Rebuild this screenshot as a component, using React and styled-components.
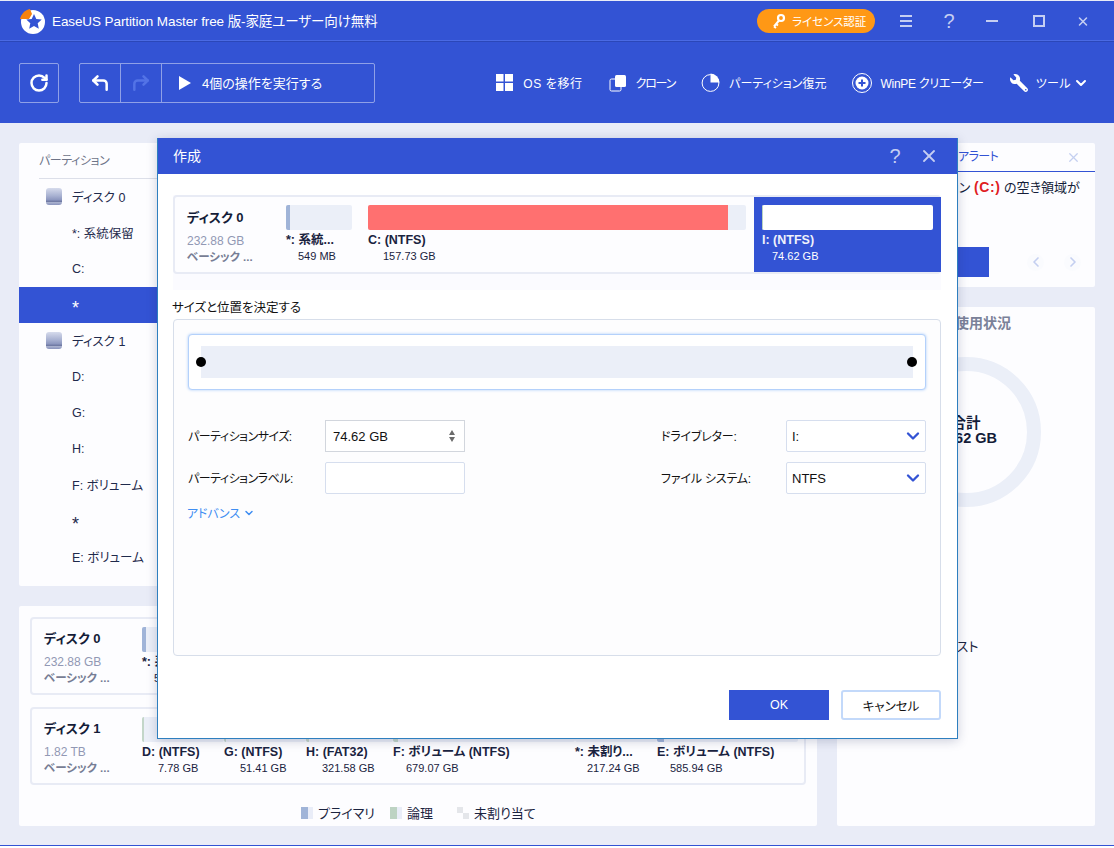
import React from "react";
import styled, { createGlobalStyle } from "styled-components";
import { ChevronDown, ChevronLeft, ChevronRight, CornerUpLeft, CornerUpRight, RotateCw, X } from "lucide-react";
import { FaWrench } from "react-icons/fa";

const FONT = `"Liberation Sans", "Noto Sans CJK JP", sans-serif`;
const BLUE = "#3353d4";

const GlobalStyle = createGlobalStyle`
  html, body { margin: 0; padding: 0; background: #e9ecf7; }
  body {
    font-family: ${FONT};
    font-feature-settings: "palt";
    font-size: 12.5px;
    color: #1b2440;
  }
  * { box-sizing: border-box; }
`;

const Window = styled.div`
  position: relative;
  width: 1114px;
  height: 848px;
  overflow: hidden;
  background: #e9ecf7;
  border-bottom: 2px solid #fff;
`;

const TitleBar = styled.div`
  height: 42px;
  display: flex;
  align-items: center;
  padding: 0 0 0 19px;
  background: ${BLUE};
  border-top: 1px solid #e9ecf7;
  border-bottom: 1px solid #2b47b8;
  box-shadow: inset 0 -1px 0 #4a6ae4;
  color: #fff;
`;

const TitleText = styled.span`
  margin-left: 7px;
  padding-bottom: 2px;
  font-size: 13.5px;
  letter-spacing: -0.1px;
  flex: 1;
`;

const LicenseButton = styled.div`
  width: 118px;
  height: 24px;
  display: flex;
  align-items: center;
  gap: 6px;
  padding-left: 15px;
  margin-right: 21px;
  border-radius: 12px;
  background: #ff9815;
  font-size: 11.5px;
`;

const WinButton = styled.div`
  width: ${(p) => p.$w || 44}px;
  display: flex;
  justify-content: center;
  color: #c5cef2;
  font-size: 20px;
  line-height: 20px;
`;

const Toolbar = styled.div`
  height: 81px;
  display: flex;
  align-items: center;
  padding: 0 25px 0 19px;
  background: ${BLUE};
  color: #fff;
`;

const IconBox = styled.div`
  width: 40px;
  height: 40px;
  display: flex;
  align-items: center;
  justify-content: center;
  border: 1px solid rgba(255, 255, 255, 0.45);
  border-radius: 2px;
`;

const ActionGroup = styled.div`
  width: 296px;
  height: 40px;
  margin-left: 20px;
  display: flex;
  border: 1px solid rgba(255, 255, 255, 0.45);
  border-radius: 2px;
`;

const ActionCell = styled.div`
  width: 41px;
  display: flex;
  align-items: center;
  justify-content: center;
  border-right: 1px solid rgba(255, 255, 255, 0.45);
`;

const RunCell = styled.div`
  flex: 1;
  display: flex;
  align-items: center;
  gap: 10px;
  padding-left: 16px;
  font-size: 13px;
`;

const ToolItems = styled.div`
  margin-left: auto;
  display: flex;
  align-items: center;
  gap: 26px;
`;

const ToolItem = styled.div`
  display: flex;
  align-items: center;
  gap: ${(p) => p.$gap || 9}px;
  font-size: 12px;
  letter-spacing: ${(p) => p.$ls || 0}px;
`;

const Wrench = styled(FaWrench)`
  transform: scaleX(-1);
`;

const ToolChevron = styled(ChevronDown)`
  margin-left: -6px;
`;

const Content = styled.div`
  display: grid;
  grid-template-columns: 798px 258px;
  column-gap: 20px;
  padding: 20px 19px 0;
  height: 723px;
  border-bottom: 1px solid ${BLUE};
`;

const Column = styled.div`
  display: flex;
  flex-direction: column;
  gap: 20px;
  height: 683px;
`;

const Panel = styled.div`
  background: #fdfdff;
  height: ${(p) => p.$h}px;
  border-radius: 2px;
  position: relative;
`;

const PartitionHead = styled.div`
  height: 36px;
  margin-left: 20px;
  padding-top: 8px;
  border-bottom: 1px solid #dcdfe9;
  color: #6e7488;
  font-size: 12px;
  letter-spacing: -0.4px;
`;

const TreeRow = styled.div`
  height: 36px;
  display: flex;
  align-items: center;
  gap: 10px;
  padding: ${(p) => (p.$big ? "7px" : "0")} 0 1px ${(p) => (p.$disk ? 27 : 53)}px;
  font-size: ${(p) => (p.$big ? 18 : 12.5)}px;
  color: ${(p) => (p.$on ? "#fff" : "#1f2a4c")};
  background: ${(p) => (p.$on ? BLUE : "transparent")};
`;

const DiskGlyph = styled.i`
  width: 16px;
  height: 17px;
  border-radius: 3px;
  background: linear-gradient(#d6dbec 0%, #a9b2d2 45%, #8a94bd 72%, #5f6a97 78%, #aab2cf 84%, #8a94bd 100%);
`;

const DiskStack = styled.div`
  display: flex;
  flex-direction: column;
  gap: 12px;
  padding: 11px 11px 0;
`;

const DiskCard = styled.div`
  display: flex;
  height: ${(p) => p.$h || 78}px;
  padding-left: 12px;
  border: 2px solid #e8ebf5;
  border-radius: 4px;
  background: #fdfdff;
`;

const DiskInfo = styled.div`
  width: ${(p) => p.$w}px;
  flex: none;
  padding-top: ${(p) => p.$top}px;
`;

const DiskName = styled.div`
  font-weight: 700;
  font-size: 13px;
  color: #141c38;
  margin-bottom: 7px;
`;

const DiskMeta = styled.div`
  font-size: ${(p) => (p.$soft ? 12 : 11.5)}px;
  line-height: 16px;
  color: ${(p) => (p.$soft ? "#9198b4" : "#777d95")};
  font-weight: ${(p) => (p.$soft ? 400 : 700)};
`;

const Slot = styled.div`
  width: ${(p) => p.$w}px;
  margin-left: ${(p) => p.$gap || 0}px;
  flex: none;
  white-space: nowrap;
  padding: ${(p) => (p.$on ? "8px 8px 0" : "8px 0 0")};
  background: ${(p) => (p.$on ? BLUE : "transparent")};
  color: ${(p) => (p.$on ? "#fff" : "#1a2340")};
`;

const Bar = styled.div`
  height: 25px;
  border-radius: 2px;
  background: ${(p) => p.$track || "#ebeff8"};
  overflow: hidden;
`;

const BarFill = styled.div`
  height: 100%;
  background: ${(p) => p.$color};
`;

const SlotName = styled.div`
  margin-top: 3px;
  font-size: 12.5px;
  line-height: 15px;
  font-weight: 700;
  opacity: ${(p) => (p.$on ? 0.92 : 1)};
`;

const SlotSize = styled.div`
  padding-left: ${(p) => p.$in}px;
  font-size: 11px;
  line-height: 16px;
`;

const Legend = styled.div`
  position: absolute;
  left: 282px;
  bottom: 4px;
  display: flex;
  font-size: 13px;
`;

const LegendItem = styled.div`
  display: flex;
  align-items: center;
  gap: 5px;
  margin-right: ${(p) => p.$after || 0}px;
`;

const Swatch = styled.i`
  width: 12px;
  height: 12px;
  background: linear-gradient(90deg, ${(p) => p.$c} 0 58%, #e9edf8 58% 100%);
`;

const Checker = styled.i`
  width: 12px;
  height: 12px;
  background: conic-gradient(#fdfdff 0 25%, #e4e6ea 0 50%, #fdfdff 0 75%, #e4e6ea 0);
`;

const AlertHead = styled.div`
  height: 29px;
  display: flex;
  align-items: center;
  justify-content: space-between;
  padding: 0 14px 3px 121px;
  border-bottom: 1px solid ${BLUE};
  color: ${BLUE};
  font-size: 12px;
  letter-spacing: -0.6px;
`;

const AlertClose = styled(X)`
  margin-top: 3px;
`;

const AlertBody = styled.div`
  padding: 5px 0 0 54px;
  font-size: 13px;
  color: #141c38;
`;

const Red = styled.b`
  color: #e0201f;
  font-size: 14px;
  letter-spacing: 0.6px;
`;

const AlertFoot = styled.div`
  display: flex;
  align-items: center;
  margin-top: 51px;
  padding-left: 16px;
`;

const AlertButton = styled.div`
  width: 136px;
  height: 30px;
  flex: none;
  background: ${BLUE};
  margin-right: 38px;
`;

const RoundNav = styled.div`
  width: 17px;
  height: 17px;
  flex: none;
  margin-right: 20px;
  display: flex;
  align-items: center;
  justify-content: center;
  border-radius: 50%;
  background: #fafbfe;
  color: #c4cff0;
`;

const UsageTitle = styled.div`
  padding: 5px 0 0 118px;
  font-size: 14px;
  font-weight: 700;
  color: #7a8199;
`;

const Donut = styled.div`
  position: relative;
  width: 150px;
  height: 150px;
  margin: 25px 0 0 54px;
`;

const DonutText = styled.div`
  position: absolute;
  inset: 59px 0 0;
  text-align: center;
  font-weight: 700;
  font-size: 14.5px;
  line-height: 15px;
  color: #141c38;
`;

const UsageList = styled.div`
  margin-top: 129px;
  padding-left: 109px;
  font-size: 13px;
`;

const Dialog = styled.div`
  position: absolute;
  left: 157px;
  top: 138px;
  width: 801px;
  height: 601px;
  display: flex;
  flex-direction: column;
  background: #fff;
  border: 1px solid #2e7fbf;
  border-top: 0;
  box-shadow: 0 2px 10px rgba(30, 40, 90, 0.22);
`;

const DialogHead = styled.div`
  height: 36px;
  flex: none;
  display: flex;
  align-items: center;
  padding: 0 18px 0 15px;
  background: ${BLUE};
  color: #fff;
  font-size: 14px;
`;

const DialogTitle = styled.span`
  flex: 1;
  padding-bottom: 3px;
`;

const DialogBody = styled.div`
  flex: 1;
  display: flex;
  flex-direction: column;
  padding: 21px 16px 0 15px;
`;

const DiskStrip = styled.div`
  background: #fbfbff;
  height: 95px;
`;

const SectionLabel = styled.div`
  margin: 9px 0 2px -1px;
  font-size: 12.5px;
  line-height: 18px;
  color: #111;
`;

const SectionBox = styled.div`
  height: 337px;
  padding: 14px 14px 0;
  border: 1px solid #d7deea;
  border-radius: 4px;
  background: #fdfdfe;
`;

const SliderFrame = styled.div`
  height: 56px;
  padding: 11px 12px;
  border: 1px solid #b4d1fb;
  border-radius: 4px;
  box-shadow: 0 0 3px #a9cbfa;
  background: #fff;
`;

const SliderTrack = styled.div`
  position: relative;
  height: 32px;
  background: #ebeff8;
`;

const Handle = styled.i`
  position: absolute;
  top: 11px;
  ${(p) => (p.$end ? "right: -4px;" : "left: -5px;")}
  width: 10px;
  height: 10px;
  border-radius: 50%;
  background: #000;
`;

const FormGrid = styled.div`
  display: grid;
  grid-template-columns: 137px 140px 1fr 140px;
  grid-auto-rows: 32px;
  row-gap: 10px;
  margin-top: 30px;
  align-items: center;
`;

const FieldLabel = styled.label`
  font-size: 12px;
  letter-spacing: ${(p) => p.$ls ?? -0.2}px;
  color: #111;
  padding: 0 0 2px ${(p) => p.$in || 0}px;
`;

const Field = styled.div`
  height: 32px;
  display: flex;
  align-items: center;
  justify-content: space-between;
  padding: 0 ${(p) => p.$right ?? 9}px 0 ${(p) => p.$left || 5}px;
  background: #fff;
  font-size: 13px;
  color: #111;
  border: 1px solid ${(p) => (p.$square ? "#d2d6dd" : "#d6deee")};
  border-radius: ${(p) => (p.$square ? 0 : 2)}px;
`;

const Spinner = styled.span`
  display: flex;
  flex-direction: column;
  gap: 2px;
`;

const Tri = styled.i`
  width: 0;
  height: 0;
  border-left: 3.5px solid transparent;
  border-right: 3.5px solid transparent;
  ${(p) => (p.$down ? "border-top" : "border-bottom")}: 5px solid #6b6b6b;
`;

const AdvancedLink = styled.div`
  display: flex;
  align-items: center;
  gap: 3px;
  margin: 10px 0 0 -1px;
  color: #3f8ef2;
  font-size: 12px;
  letter-spacing: -0.2px;
`;

const DialogFoot = styled.div`
  display: flex;
  justify-content: flex-end;
  gap: 12px;
  margin-top: 34px;
`;

const Button = styled.div`
  width: 100px;
  height: 30px;
  display: flex;
  align-items: center;
  justify-content: center;
  font-size: 12.5px;
  color: ${(p) => (p.$primary ? "#fff" : "#111")};
  background: ${(p) => (p.$primary ? BLUE : "#fff")};
  border: ${(p) => (p.$primary ? "0" : "2px solid #c3d9fa")};
  border-radius: ${(p) => (p.$primary ? 0 : 3)}px;
`;

const Logo = () => (
  <svg width="26" height="26" viewBox="0 0 26 26">
    <circle cx="14" cy="14" r="12" fill="#fff" />
    <path d="M1 11 C2 6 6 2 11 1 L13 6 L10 11 Z" fill="#f5820f" />
    <path d="M15 6 l2.3 5 5.4.6-4 3.7 1.1 5.4-4.8-2.7-4.8 2.7 1.1-5.4-4-3.7 5.4-.6z" fill={BLUE} />
  </svg>
);

const KeyIcon = () => (
  <svg width="14" height="16" viewBox="0 0 14 16" fill="none" stroke="#fff">
    <circle cx="9" cy="5" r="3" strokeWidth="2.2" />
    <path d="M7 7.5 L2 13.5 M2 13.5 L4 15 M4 11 L6 12.5" strokeWidth="2" />
  </svg>
);

const MenuIcon = () => (
  <svg width="12" height="12" viewBox="0 0 12 12" fill="#c5cef2">
    <rect y="0" width="12" height="2" />
    <rect y="5" width="12" height="2" />
    <rect y="10" width="12" height="2" />
  </svg>
);

const MinIcon = () => (
  <svg width="12" height="12" viewBox="0 0 12 12" fill="#c5cef2">
    <rect y="5" width="12" height="2" />
  </svg>
);

const MaxIcon = () => (
  <svg width="12" height="12" viewBox="0 0 12 12" fill="none" stroke="#c5cef2" strokeWidth="2">
    <rect x="1" y="1" width="10" height="10" />
  </svg>
);

const PlayIcon = () => (
  <svg width="14" height="16" viewBox="0 0 14 16">
    <path d="M1 1 L13 8 L1 15 Z" fill="#fff" />
  </svg>
);

const WindowsIcon = () => (
  <svg width="17" height="17" viewBox="0 0 17 17" fill="#fff">
    <rect width="7.5" height="7.5" />
    <rect x="9" width="8" height="7.5" />
    <rect y="9" width="7.5" height="8" />
    <rect x="9" y="9" width="8" height="8" />
  </svg>
);

const CloneIcon = () => (
  <svg width="18" height="18" viewBox="0 0 18 18">
    <rect x="1" y="5" width="11" height="12" rx="1.5" fill="none" stroke="#fff" />
    <rect x="6" y="1" width="11" height="12" rx="1.5" fill="#fff" />
  </svg>
);

const PieIcon = () => (
  <svg width="19" height="19" viewBox="0 0 19 19">
    <circle cx="9.5" cy="10" r="8.4" fill="none" stroke="#fff" />
    <path d="M9.5 0.6 A9 9 0 0 1 18.5 9.5 L9.5 9.5 Z" fill="#fff" />
  </svg>
);

const PlusIcon = () => (
  <svg width="20" height="20" viewBox="0 0 20 20">
    <circle cx="10" cy="10" r="9.5" fill="none" stroke="#fff" />
    <circle cx="10" cy="10" r="6.5" fill="#fff" />
    <path d="M10 6.5 V13.5 M6.5 10 H13.5" stroke={BLUE} strokeWidth="2" />
  </svg>
);

const tree = [
  { label: "ディスク 0", disk: true },
  { label: "*: 系統保留" },
  { label: "C:" },
  { label: "*", on: true, big: true },
  { label: "ディスク 1", disk: true },
  { label: "D:" },
  { label: "G:" },
  { label: "H:" },
  { label: "F: ボリューム" },
  { label: "*", big: true },
  { label: "E: ボリューム" },
];

const disk1 = [
  { name: "D: (NTFS)", size: "7.78 GB", w: 82, fill: "#c3d6c9", pct: 3 },
  { name: "G: (NTFS)", size: "51.41 GB", w: 82, fill: "#c3d6c9", pct: 3 },
  { name: "H: (FAT32)", size: "321.58 GB", w: 87, fill: "#c3d6c9", pct: 3 },
  { name: "F: ボリューム (NTFS)", size: "679.07 GB", w: 182, in: 13, fill: "#c3d6c9", pct: 3 },
  { name: "*: 未割り...", size: "217.24 GB", w: 82, in: 12, fill: "#e4e6ea", pct: 0 },
  { name: "E: ボリューム (NTFS)", size: "585.94 GB", w: 141, in: 13, fill: "#a0b4d8", pct: 5 },
];

export default function App() {
  return (
    <Window>
      <GlobalStyle />

      <TitleBar>
        <Logo />
        <TitleText>EaseUS Partition Master free 版-家庭ユーザー向け無料</TitleText>
        <LicenseButton>
          <KeyIcon />
          ライセンス認証
        </LicenseButton>
        <WinButton $w={20}><MenuIcon /></WinButton>
        <WinButton $w={66}>?</WinButton>
        <WinButton $w={20}><MinIcon /></WinButton>
        <WinButton $w={74}><MaxIcon /></WinButton>
        <WinButton $w={14}><X size={15} strokeWidth={2.6} /></WinButton>
        <WinButton $w={24} />
      </TitleBar>

      <Toolbar>
        <IconBox><RotateCw size={20} strokeWidth={3} /></IconBox>
        <ActionGroup>
          <ActionCell><CornerUpLeft size={20} strokeWidth={3} /></ActionCell>
          <ActionCell><CornerUpRight size={20} strokeWidth={3} color="#5373e6" /></ActionCell>
          <RunCell><PlayIcon />4個の操作を実行する</RunCell>
        </ActionGroup>
        <ToolItems>
          <ToolItem $gap={10} $ls={0.6}><WindowsIcon />OS を移行</ToolItem>
          <ToolItem $ls={-1.2}><CloneIcon />クローン</ToolItem>
          <ToolItem><PieIcon />パーティション復元</ToolItem>
          <ToolItem $gap={8} $ls={-0.25}><PlusIcon />WinPE クリエーター</ToolItem>
          <ToolItem $gap={8} $ls={0.4}>
            <Wrench size={18} />
            ツール
            <ToolChevron size={16} strokeWidth={3} />
          </ToolItem>
        </ToolItems>
      </Toolbar>

      <Content>
        <Column>
          <Panel $h={443}>
            <PartitionHead>パーティション</PartitionHead>
            {tree.map((row, i) => (
              <TreeRow key={i} $disk={row.disk} $on={row.on} $big={row.big}>
                {row.disk && <DiskGlyph />}
                {row.label}
              </TreeRow>
            ))}
          </Panel>
          <Panel $h={220}>
            <DiskStack>
              <DiskCard>
                <DiskInfo $w={98} $top={9}>
                  <DiskName>ディスク 0</DiskName>
                  <DiskMeta $soft>232.88 GB</DiskMeta>
                  <DiskMeta>ベーシック ...</DiskMeta>
                </DiskInfo>
                <Slot $w={66}>
                  <Bar><BarFill $color="#a0b4d8" style={{ width: "6%" }} /></Bar>
                  <SlotName>*: 系統...</SlotName>
                  <SlotSize $in={12}>549 MB</SlotSize>
                </Slot>
              </DiskCard>
              <DiskCard>
                <DiskInfo $w={98} $top={9}>
                  <DiskName>ディスク 1</DiskName>
                  <DiskMeta $soft>1.82 TB</DiskMeta>
                  <DiskMeta>ベーシック ...</DiskMeta>
                </DiskInfo>
                {disk1.map((p) => (
                  <Slot key={p.name} $w={p.w}>
                    <Bar><BarFill $color={p.fill} style={{ width: `${p.pct}%` }} /></Bar>
                    <SlotName>{p.name}</SlotName>
                    <SlotSize $in={p.in || 16}>{p.size}</SlotSize>
                  </Slot>
                ))}
              </DiskCard>
            </DiskStack>
            <Legend>
              <LegendItem $after={15}><Swatch $c="#a0b4d8" />プライマリ</LegendItem>
              <LegendItem $after={24}><Swatch $c="#bdd3c3" />論理</LegendItem>
              <LegendItem><Checker />未割り当て</LegendItem>
            </Legend>
          </Panel>
        </Column>

        <Column>
          <Panel $h={144}>
            <AlertHead>
              アラート
              <AlertClose size={15} strokeWidth={2} color="#c4cff0" />
            </AlertHead>
            <AlertBody>パーティション <Red>(C:)</Red> の空き領域が</AlertBody>
            <AlertFoot>
              <AlertButton />
              <RoundNav><ChevronLeft size={16} strokeWidth={2.5} /></RoundNav>
              <RoundNav><ChevronRight size={16} strokeWidth={2.5} /></RoundNav>
            </AlertFoot>
          </Panel>
          <Panel $h={519}>
            <UsageTitle>使用状況</UsageTitle>
            <Donut>
              <svg width="150" height="150" viewBox="0 0 150 150">
                <circle cx="75" cy="75" r="68" fill="none" stroke="#ebeff8" strokeWidth="14" />
              </svg>
              <DonutText>合計<br />74.62 GB</DonutText>
            </Donut>
            <UsageList>リスト</UsageList>
          </Panel>
        </Column>
      </Content>

      <Dialog>
        <DialogHead>
          <DialogTitle>作成</DialogTitle>
          <WinButton $w={48}>?</WinButton>
          <X size={20} strokeWidth={2.2} color="#c5cef2" />
        </DialogHead>
        <DialogBody>
          <DiskStrip>
            <DiskCard $h={79}>
              <DiskInfo $w={99} $top={10}>
                <DiskName>ディスク 0</DiskName>
                <DiskMeta $soft>232.88 GB</DiskMeta>
                <DiskMeta>ベーシック ...</DiskMeta>
              </DiskInfo>
              <Slot $w={66}>
                <Bar><BarFill $color="#a0b4d8" style={{ width: "6%" }} /></Bar>
                <SlotName>*: 系統...</SlotName>
                <SlotSize $in={12}>549 MB</SlotSize>
              </Slot>
              <Slot $w={378} $gap={16}>
                <Bar><BarFill $color="#ff7070" style={{ width: "95.3%" }} /></Bar>
                <SlotName>C: (NTFS)</SlotName>
                <SlotSize $in={15}>157.73 GB</SlotSize>
              </Slot>
              <Slot $w={187} $gap={8} $on>
                <Bar $track="#fff"><BarFill $color="#b9d3bf" style={{ width: "1px" }} /></Bar>
                <SlotName $on>I: (NTFS)</SlotName>
                <SlotSize $in={10}>74.62 GB</SlotSize>
              </Slot>
            </DiskCard>
          </DiskStrip>

          <SectionLabel>サイズと位置を決定する</SectionLabel>
          <SectionBox>
            <SliderFrame>
              <SliderTrack>
                <Handle />
                <Handle $end />
              </SliderTrack>
            </SliderFrame>
            <FormGrid>
              <FieldLabel $ls={-0.5}>パーティションサイズ:</FieldLabel>
              <Field $square $left={7}>
                74.62 GB
                <Spinner><Tri /><Tri $down /></Spinner>
              </Field>
              <FieldLabel $in={196}>ドライブレター:</FieldLabel>
              <Field $right={2}>
                I:
                <ChevronDown size={20} strokeWidth={2.8} color={BLUE} />
              </Field>
              <FieldLabel $ls={-0.5}>パーティションラベル:</FieldLabel>
              <Field />
              <FieldLabel $in={196}>ファイル システム:</FieldLabel>
              <Field $right={2}>
                NTFS
                <ChevronDown size={20} strokeWidth={2.8} color={BLUE} />
              </Field>
            </FormGrid>
            <AdvancedLink>
              アドバンス
              <ChevronDown size={12} strokeWidth={3} />
            </AdvancedLink>
          </SectionBox>

          <DialogFoot>
            <Button $primary>OK</Button>
            <Button>キャンセル</Button>
          </DialogFoot>
        </DialogBody>
      </Dialog>
    </Window>
  );
}
